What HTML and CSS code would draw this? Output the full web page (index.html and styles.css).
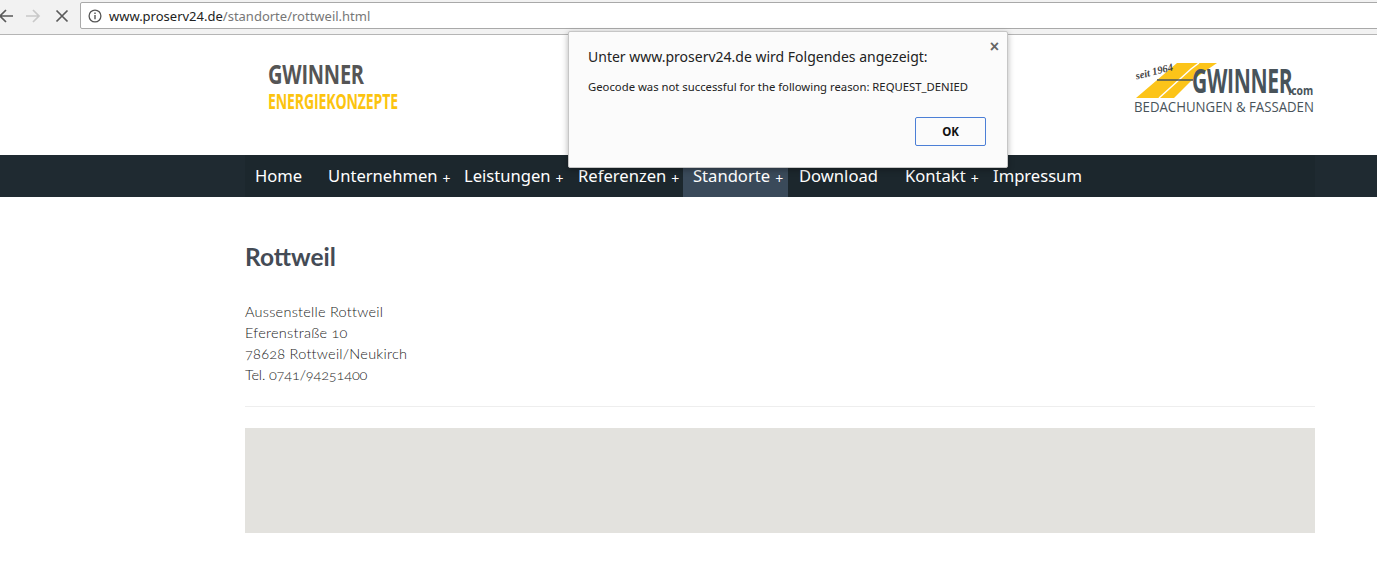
FILE: index.html
```html
<!DOCTYPE html>
<html lang="de">
<head>
<meta charset="utf-8">
<title>Rottweil</title>
<link rel="stylesheet" href="styles.css">
</head>
<body>
<div class="toolbar">
  <svg class="nav-icon back" width="16" height="16" viewBox="0 0 16 16"><path d="M15 8H2M8 2L2 8l6 6" fill="none" stroke="#5a5a5a" stroke-width="1.7"/></svg>
  <svg class="nav-icon forward" width="16" height="16" viewBox="0 0 16 16"><path d="M1 8h13M8 2l6 6-6 6" fill="none" stroke="#c9c9c9" stroke-width="1.7"/></svg>
  <svg class="nav-icon stop" width="14" height="14" viewBox="0 0 14 14"><path d="M1.500 1.500l11 11M12.500 1.500l-11 11" fill="none" stroke="#5a5a5a" stroke-width="1.7"/></svg>
  <div class="omnibox">
    <svg class="info" width="14" height="14" viewBox="0 0 14 14"><circle cx="7" cy="7" r="5.900" fill="none" stroke="#555" stroke-width="1.300"/><path d="M7 6v4.200M7 3.500v1.400" stroke="#555" stroke-width="1.400"/></svg>
    <span class="url-host">www.proserv24.de</span><span class="url-path">/standorte/rottweil.html</span>
  </div>
</div>

<header class="site-header">
  <div class="container header-row">
    <div class="logo-left">
      <div class="logo-main">GWINNER</div>
      <div class="logo-sub">ENERGIEKONZEPTE</div>
    </div>
    <div class="logo-right">
      <div class="logo-top">
        <svg class="logo-roof" width="90" height="40" viewBox="0 0 90 40"><path d="M44 0h40L58 18 41 35H3z" fill="#fcc419"/><path d="M66 0L58 6 26 35" fill="none" stroke="#fff" stroke-width="1.500"/><path d="M24 17h36" fill="none" stroke="#48535a" stroke-width="1.300"/></svg>
        <span class="logo-seit">seit 1964</span>
        <span class="logo-name">GWINNER</span><span class="logo-com">.com</span>
      </div>
      <div class="logo-tag">BEDACHUNGEN &amp; FASSADEN</div>
    </div>
  </div>
</header>

<nav class="site-nav">
  <div class="container nav-row">
    <a class="nav-item i-home">Home</a>
    <a class="nav-item i-unt">Unternehmen<span class="plus">+</span></a>
    <a class="nav-item i-lei">Leistungen<span class="plus">+</span></a>
    <a class="nav-item i-ref">Referenzen<span class="plus">+</span></a>
    <a class="nav-item i-sta active">Standorte<span class="plus">+</span></a>
    <a class="nav-item i-dow">Download</a>
    <a class="nav-item i-kon">Kontakt<span class="plus">+</span></a>
    <a class="nav-item i-imp">Impressum</a>
  </div>
</nav>

<main class="container content">
  <h1 class="title">Rottweil</h1>
  <p class="address">Aussenstelle Rottweil<br>Eferenstraße 10<br>78628 Rottweil/Neukirch<br><span class="tel">Tel. 0741/94251400</span></p>
  <hr class="rule">
  <div class="map"></div>
</main>

<div class="dialog">
  <button class="dialog-close" type="button">×</button>
  <div class="dialog-title">Unter www.proserv24.de wird Folgendes angezeigt:</div>
  <div class="dialog-msg">Geocode was not successful for the following reason: REQUEST_DENIED</div>
  <div class="dialog-actions"><button class="dialog-ok" type="button">OK</button></div>
</div>
</body>
</html>
```
FILE: styles.css
```css
* { box-sizing: border-box; }
html, body { margin: 0; height: 100%; overflow: hidden; background: #fff; }
body { font-family: "Noto Sans", sans-serif; color: #333; position: relative; }

.toolbar { height: 35px; background: #f2f2f2; border-bottom: 1px solid #b5b5b5; display: flex; align-items: center; padding-bottom: 3px; }
.nav-icon { flex: none; }
.back { margin-left: -2px; }
.forward { margin-left: 11px; }
.stop { margin-left: 14px; }
.omnibox { flex: 1; height: 27px; margin-left: 11px; margin-right: -4px; background: #fff; border: 1px solid #a9a9a9; border-radius: 2px; display: flex; align-items: center; padding-left: 7px; font: 13px "Noto Sans", sans-serif; white-space: nowrap; }
.info { margin-right: 7px; flex: none; }
.url-host { color: #222; }
.url-path { color: #777; }

.container { width: 1070px; margin-left: 245px; }
.site-header { height: 120px; }
.header-row { display: flex; justify-content: space-between; height: 100%; }
.logo-left { padding: 26px 0 0 23px; font-family: "Open Sans", sans-serif; font-weight: 700; line-height: 1; }
.logo-main { font-size: 26px; color: #555; transform: scaleX(.77); transform-origin: left; letter-spacing: -.3px; }
.logo-sub { font-size: 21px; color: #fcc40f; transform: scaleX(.67); transform-origin: left; margin-top: 4px; letter-spacing: -.2px; white-space: nowrap; }
.logo-right { width: 182px; padding-top: 28px; position: relative; color: #48535a; }
.logo-top { position: relative; height: 40px; }
.logo-seit { position: absolute; left: 2px; top: 3px; font: italic 700 10.500px "Liberation Serif", serif; color: #444; transform: rotate(-14deg); white-space: nowrap; }
.logo-roof { position: absolute; left: 0; top: 0; }
.logo-name { position: absolute; left: 59px; top: -6px; font: 700 34px "Open Sans", sans-serif; transform: scaleX(.62); transform-origin: left; letter-spacing: -.5px; }
.logo-com { position: absolute; right: 2px; top: 18px; font: 700 13px "Open Sans", sans-serif; transform: scaleX(.8); transform-origin: right; }
.logo-tag { font: 14.500px "Open Sans", sans-serif; white-space: nowrap; margin-left: 1px; margin-top: -5px; line-height: 18px; transform: scaleX(.912); transform-origin: left; }

.site-nav { height: 42px; background: #1f2a31; }
.nav-row { display: flex; height: 100%; background: #1c272d; }
.nav-item { display: block; height: 42px; line-height: 41px; font-size: 16.600px; color: #fff; white-space: nowrap; flex: none; padding-left: 10px; }
.plus { font-size: 14px; margin-left: 5px; position: relative; top: 2px; }
.i-home { width: 73px; }
.i-unt { width: 136px; }
.i-lei { width: 114px; }
.i-ref { width: 115px; }
.active { background: #3a4a5a; width: 105px; }
.i-dow { width: 107px; padding-left: 11px; }
.i-kon { width: 88px; }

.content { padding-top: 1px; }
.title { margin: 46px 0 0; font: 700 24.500px/26px "Lato", sans-serif; color: #444b55; }
.address { margin: 31px 0 0; font: 300 14.500px/21px "Lato", sans-serif; color: #222; font-variant-numeric: oldstyle-nums; letter-spacing: .25px; }
.tel { letter-spacing: -.15px; }
.rule { border: 0; border-top: 1px solid #eee; margin: 21px 0 21px; }
.map { height: 105px; background: #e3e2de; }

.dialog { position: absolute; left: 568px; top: 31px; width: 440px; height: 137px; background: #fbfbfb; border: 1px solid #c6c6c6; border-radius: 2px; box-shadow: 0 2px 6px rgba(0,0,0,.3); padding: 15px 19px 0; font-family: "Noto Sans", sans-serif; }
.dialog-title { font-size: 14px; line-height: 20px; color: #222; }
.dialog-msg { font-size: 11.300px; line-height: 14px; color: #222; margin-top: 13px; }
.dialog-close { position: absolute; right: 8px; top: 7px; border: 0; background: none; padding: 0; font: 700 16px/16px "Liberation Sans", sans-serif; color: #666; }
.dialog-actions { display: flex; justify-content: flex-end; margin-top: 23px; margin-right: 2px; }
.dialog-ok { width: 71px; height: 29px; background: #fbfbfb; border: 1px solid #4c7fd6; border-radius: 2px; font: 700 11.500px "Noto Sans", sans-serif; color: #111; }
```
